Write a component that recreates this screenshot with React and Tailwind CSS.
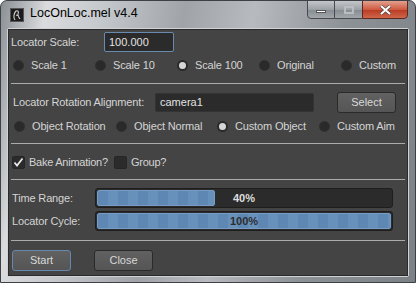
import React from "react";

const font = { fontFamily: '"Liberation Sans", Arial, sans-serif' };

function Radio({ on, label, w }) {
  return (
    <div className={`flex items-center gap-[7px] ${w}`}>
      <span
        className={`block w-[11px] h-[11px] rounded-full ${
          on
            ? "bg-[#d6d6d6] border-[2px] border-[#2a2a2a]"
            : "bg-[#2a2a2a] border border-[#303030]"
        }`}
      />
      <span className="text-[11px] text-[#d4d4d4] leading-none tracking-[-0.15px]">{label}</span>
    </div>
  );
}

function Check({ on, label, w }) {
  return (
    <div className={`flex items-center gap-[4px] ${w}`}>
      <span className="w-[13px] h-[13px] bg-[#2b2b2b] border border-[#262626] rounded-[2px] flex items-center justify-center">
        {on && (
          <svg width="11" height="11" viewBox="0 0 11 11">
            <path d="M1.5 5.5 L4 8.5 L9.5 1.5" fill="none" stroke="#e8e8e8" strokeWidth="1.8" />
          </svg>
        )}
      </span>
      <span className="text-[11px] text-[#d4d4d4] leading-none tracking-[-0.25px]">{label}</span>
    </div>
  );
}

function Sep() {
  return <div className="mx-[2px] h-px bg-[#ababab]" />;
}

function Bar({ pct, dark }) {
  return (
    <div className="relative w-[298px] h-[20px] bg-[#2b2b2b] border border-[#1e1e1e] rounded-[3px] p-px">
      <div
        className="h-full rounded-[2px] border border-[#769cc5] bg-[repeating-linear-gradient(90deg,#5e87b3_0px,#5e87b3_10px,#6790bb_10px,#6790bb_20px)]"
        style={{ width: `${pct}%` }}
      />
      <div
        className={`absolute inset-0 flex items-center justify-center text-[11px] font-bold ${
          dark ? "text-[#2e2e2e]" : "text-[#dedede]"
        }`}
      >
        {pct}%
      </div>
    </div>
  );
}

function Btn({ children, focus }) {
  return (
    <div
      className={`w-[59px] h-[21px] flex items-center justify-center rounded-[3px] text-[11px] text-[#d8d8d8] bg-[linear-gradient(#616161,#555555)] border ${
        focus ? "border-[#6688b0]" : "border-[#2a2a2a]"
      }`}
    >
      {children}
    </div>
  );
}

export default function App() {
  return (
    <div
      style={font}
      className="w-[416px] h-[283px] flex flex-col rounded-t-[7px] border border-[#3d4045] bg-[linear-gradient(100deg,#8a8f94_0%,#d9dbdd_10%,#c6c9cc_22%,#a0a4a9_40%,#b7babe_55%,#8d9297_75%,#7c8187_100%)] overflow-hidden"
    >
      {/* title bar */}
      <div className="h-[27px] flex items-start shrink-0">
        <div className="mt-[7px] ml-[9px] w-[14px] h-[14px] bg-[#1c1c1c] border border-[#555] flex items-center justify-center">
          <svg width="10" height="12" viewBox="0 0 10 12">
            <path d="M3 11 C1 8 2 4 4 2 C6 1 7 3 6 5 C5 7 7 8 8 10 M4 6 L7 7" fill="none" stroke="#cfcfcf" strokeWidth="1.1" />
          </svg>
        </div>
        <div className="ml-[6px] mt-[6px] text-[12.5px] text-black leading-none">LocOnLoc.mel v4.4</div>
        <div className="ml-auto mr-[7px] flex h-[19px] -mt-px">
          <div className="w-[28px] h-full border border-[#474b51] rounded-bl-[4px] bg-[linear-gradient(#c4c7ca,#9ca1a6_50%,#868b91_51%,#a2a7ac)] flex items-center justify-center">
            <span className="block w-[10px] h-[3px] bg-white border border-[#555] mt-[3px]" />
          </div>
          <div className="w-[27px] h-full border-y border-[#474b51] bg-[linear-gradient(#c4c7ca,#9ca1a6_50%,#868b91_51%,#a2a7ac)] flex items-center justify-center">
            <span className="block w-[10px] h-[8px] border-[2px] border-[#b9bcc0] bg-transparent" />
          </div>
          <div className="w-[46px] h-full border border-[#5a2a22] rounded-br-[4px] bg-[linear-gradient(#e3a08f,#cf5a40_50%,#b83a22_51%,#d0664a)] flex items-center justify-center">
            <svg width="13" height="10" viewBox="0 0 13 10">
              <path d="M2 1 L11 9 M11 1 L2 9" stroke="#444" strokeWidth="3.2" />
              <path d="M2 1 L11 9 M11 1 L2 9" stroke="#fff" strokeWidth="2" />
            </svg>
          </div>
        </div>
      </div>

      {/* content */}
      <div className="mx-[6px] mb-[5px] flex-1 border border-[#d0d3d6] rounded-[2px] p-0">
        <div className="h-full bg-[#444444] border border-[#2a2a2a] flex flex-col">
          {/* row1 */}
          <div className="mt-[2px] flex items-center h-[20px] pl-[2px]">
            <div className="w-[93px] text-[11px] text-[#d4d4d4] tracking-[-0.15px]">Locator Scale:</div>
            <div className="w-[70px] h-[20px] bg-[#2b2b2b] border border-[#6a8bb0] rounded-[2px] flex items-center pl-[4px] text-[11px] text-[#e2e2e2]">
              100.000
            </div>
          </div>
          {/* radios */}
          <div className="mt-[4px] h-[18px] flex items-center pl-[4px]">
            <Radio label="Scale 1" w="w-[82px]" />
            <Radio label="Scale 10" w="w-[82px]" />
            <Radio on label="Scale 100" w="w-[82px]" />
            <Radio label="Original" w="w-[82px]" />
            <Radio label="Custom" w="w-[60px]" />
          </div>
          <div className="mt-[9px]"><Sep /></div>
          {/* row3 */}
          <div className="mt-[8px] h-[21px] flex items-center pl-[4px]">
            <div className="w-[142px] text-[11px] text-[#d4d4d4] tracking-[-0.15px]">Locator Rotation Alignment:</div>
            <div className="w-[159px] h-[19px] bg-[#2b2b2b] border border-[#333] rounded-[2px] flex items-center pl-[4px] text-[11px] text-[#e2e2e2]">
              camera1
            </div>
            <div className="ml-[23px]">
              <Btn>Select</Btn>
            </div>
          </div>
          {/* radios 2 */}
          <div className="mt-[4px] h-[18px] flex items-center pl-[5px]">
            <Radio label="Object Rotation" w="w-[102px]" />
            <Radio label="Object Normal" w="w-[101px]" />
            <Radio on label="Custom Object" w="w-[102px]" />
            <Radio label="Custom Aim" w="w-[80px]" />
          </div>
          <div className="mt-[8px]"><Sep /></div>
          {/* checks */}
          <div className="mt-[9px] h-[18px] flex items-center pl-[3px]">
            <Check on label="Bake Animation?" w="w-[102px]" />
            <Check label="Group?" />
          </div>
          <div className="mt-[8px]"><Sep /></div>
          {/* bars */}
          <div className="mt-[8px] flex items-center pl-[3px]">
            <div className="w-[83px] text-[11px] text-[#d4d4d4] tracking-[-0.15px]">Time Range:</div>
            <Bar pct={40} />
          </div>
          <div className="mt-[3px] flex items-center pl-[3px]">
            <div className="w-[83px] text-[11px] text-[#d4d4d4] tracking-[-0.15px]">Locator Cycle:</div>
            <Bar pct={100} dark />
          </div>
          <div className="mt-[9px]"><Sep /></div>
          <div className="mt-[9px] flex items-center pl-[3px] gap-[23px]">
            <Btn focus>Start</Btn>
            <Btn>Close</Btn>
          </div>
        </div>
      </div>
    </div>
  );
}
